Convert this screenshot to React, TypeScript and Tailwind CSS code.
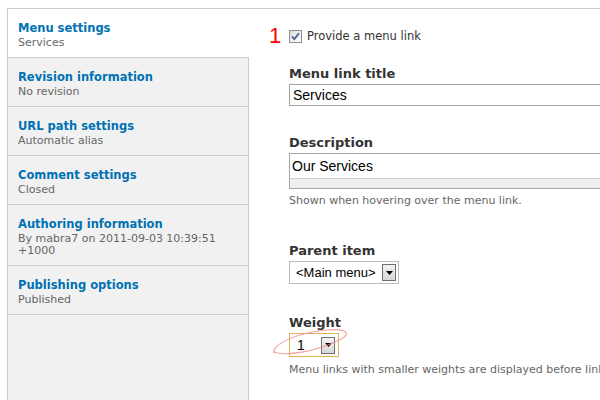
import React from 'react';

const tabs = [
  { title: 'Menu settings', summary: 'Services', active: true },
  { title: 'Revision information', summary: 'No revision' },
  { title: 'URL path settings', summary: 'Automatic alias' },
  { title: 'Comment settings', summary: 'Closed' },
  { title: 'Authoring information', summary: 'By mabra7 on 2011-09-03 10:39:51 +1000' },
  { title: 'Publishing options', summary: 'Published' },
];

function DropButton() {
  return (
    <span className="ml-auto flex h-[17px] w-[14px] items-center justify-center border border-[#707070] bg-gradient-to-b from-[#f4f4f4] to-[#d6d6d6]">
      <svg width="7" height="4" viewBox="0 0 7 4">
        <path d="M0 0h7L3.5 4z" fill="#000" />
      </svg>
    </span>
  );
}

export default function App() {
  return (
    <div className="relative h-[400px] w-[600px] overflow-hidden bg-white pl-[7px] pt-2 font-['DejaVu_Sans',sans-serif]">
      <div className="flex h-full border-l border-t border-[#cccccc]">
        {/* vertical tabs */}
        <div className="flex w-[241px] shrink-0 flex-col bg-[#f1f1f1]">
          {tabs.map((t) => (
            <div
              key={t.title}
              className={
                t.active
                  ? 'border-b border-[#cccccc] bg-white pb-[8px] pl-[10px] pr-3 pt-[10px]'
                  : 'border-b border-r border-[#cccccc] pb-[8px] pl-[10px] pr-3 pt-[10px]'
              }
            >
              <div className="text-[11.5px] font-bold leading-[18px] text-[#0071b3]">{t.title}</div>
              <div className="text-[11px] leading-[12px] text-[#666666]">{t.summary}</div>
            </div>
          ))}
          <div className="flex-1 border-r border-[#cccccc]" />
        </div>

        {/* menu settings pane */}
        <div className="relative flex-1 pl-10 pt-[20px] text-[#333333]">
          <span className="absolute left-[20px] top-[14px] font-['Liberation_Sans',sans-serif] text-[22px] leading-[26px] text-[#ff0000]">
            1
          </span>
          <label className="flex items-center gap-[5px] text-[11.5px] leading-[14px]">
            <span className="flex h-[13px] w-[13px] items-center justify-center border border-[#8f8f8f] bg-gradient-to-br from-[#dcdcdc] to-[#ffffff]">
              <svg width="9" height="9" viewBox="0 0 9 9">
                <path d="M1 4.5l2.3 2.6L8 1.2" fill="none" stroke="#4a5f9a" strokeWidth="1.8" />
              </svg>
            </span>
            Provide a menu link
          </label>

          <div className="mt-[23px] text-[13px] font-bold leading-[16px]">Menu link title</div>
          <div className="mt-[2px] flex h-[22px] w-[340px] items-center border border-[#a6a6a6] pl-[3px] font-['Liberation_Sans',sans-serif] text-[14px] text-black">
            Services
          </div>

          <div className="mt-[29px] text-[13px] font-bold leading-[16px]">Description</div>
          <div className="mt-[2px] w-[340px] border border-[#a6a6a6]">
            <div className="flex h-[24px] items-center pl-[2px] font-['Liberation_Sans',sans-serif] text-[14px] text-black">
              Our Services
            </div>
            <div className="h-[10px] border-t border-[#cccccc] bg-[#eeeeee]" />
          </div>
          <div className="mt-[5px] text-[11px] leading-[14px] text-[#666666]">
            Shown when hovering over the menu link.
          </div>

          <div className="mt-[35px] text-[13px] font-bold leading-[16px]">Parent item</div>
          <div className="mt-[2px] flex h-[23px] w-[110px] items-center border border-[#bbbbbb] pl-[6px] pr-[2px] font-['Liberation_Sans',sans-serif] text-[13px] text-black">
            &lt;Main menu&gt;
            <DropButton />
          </div>

          <div className="mt-[31px] text-[13px] font-bold leading-[16px]">Weight</div>
          <div className="relative mt-[2px] flex h-[24px] w-[50px] items-center border border-[#e0b45a] pl-[7px] pr-[3px] font-['Liberation_Sans',sans-serif] text-[14px] text-black">
            1
            <DropButton />
            <svg className="absolute -left-[21px] -top-[7px]" width="84" height="34" viewBox="0 0 84 34">
              <path
                d="M6 26 C 0 20, 24 6, 58 3 C 80 1, 84 8, 66 15 C 48 23, 20 30, 4 25"
                fill="none"
                stroke="#f08a8a"
                strokeWidth="1.1"
                opacity="0.8"
              />
            </svg>
          </div>
          <div className="mt-[6px] whitespace-nowrap text-[11px] leading-[14px] text-[#666666]">
            Menu links with smaller weights are displayed before links with larger weights.
          </div>
        </div>
      </div>
    </div>
  );
}
